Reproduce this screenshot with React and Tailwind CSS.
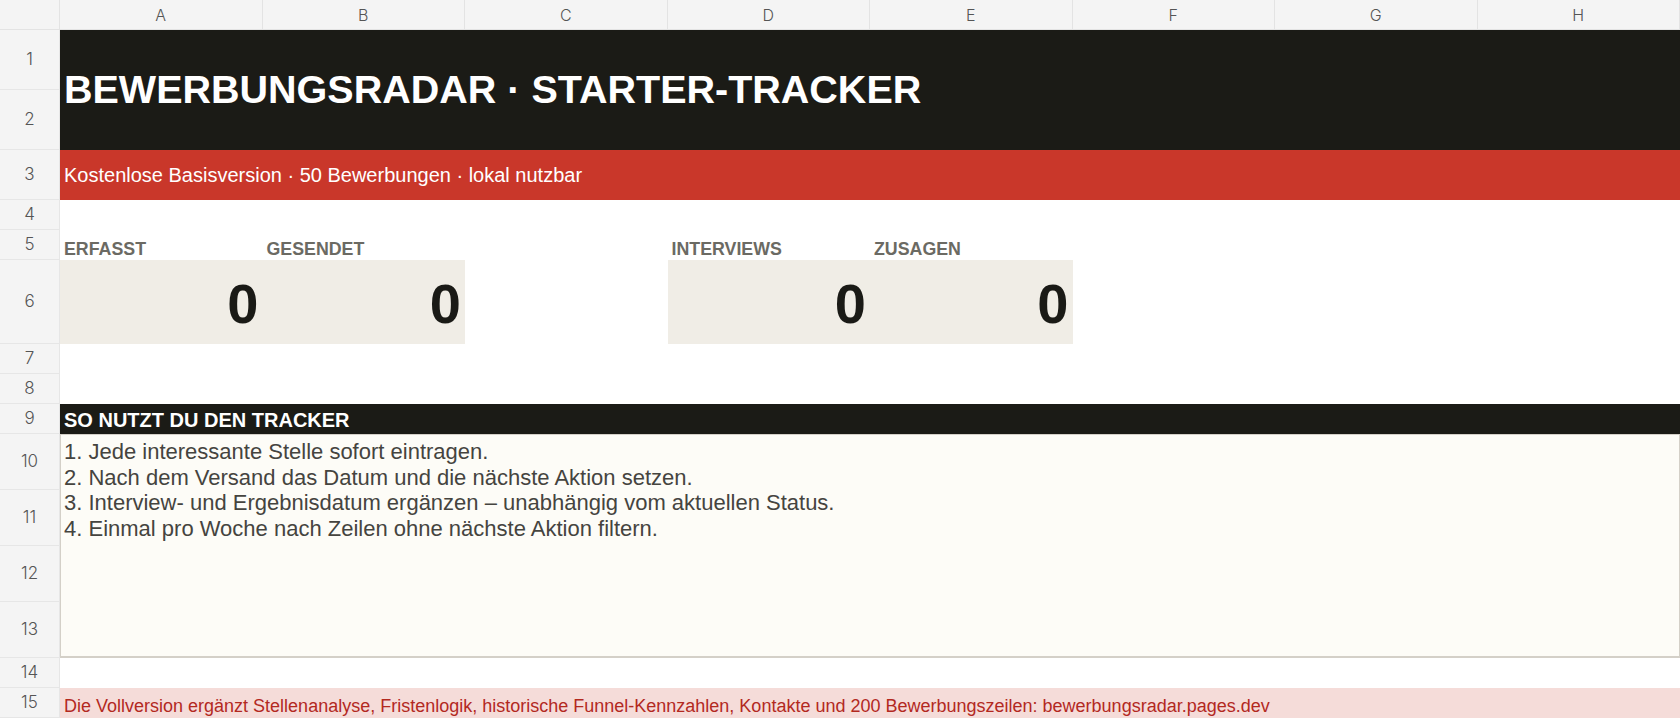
const columns = [
  { label: 'A', pos: 'col-start-2' },
  { label: 'B', pos: 'col-start-3' },
  { label: 'C', pos: 'col-start-4' },
  { label: 'D', pos: 'col-start-5' },
  { label: 'E', pos: 'col-start-6' },
  { label: 'F', pos: 'col-start-7' },
  { label: 'G', pos: 'col-start-8' },
  { label: 'H', pos: 'col-start-9' },
];

const rows = [
  { n: 1, pos: 'row-start-2' },
  { n: 2, pos: 'row-start-3' },
  { n: 3, pos: 'row-start-4' },
  { n: 4, pos: 'row-start-5' },
  { n: 5, pos: 'row-start-6' },
  { n: 6, pos: 'row-start-7' },
  { n: 7, pos: 'row-start-8' },
  { n: 8, pos: 'row-start-9' },
  { n: 9, pos: 'row-start-10' },
  { n: 10, pos: 'row-start-11' },
  { n: 11, pos: 'row-start-12' },
  { n: 12, pos: 'row-start-13' },
  { n: 13, pos: 'row-start-14' },
  { n: 14, pos: 'row-start-15' },
  { n: 15, pos: 'row-start-16' },
];

const stats = [
  { label: 'ERFASST', value: 0, pos: 'col-start-2' },
  { label: 'GESENDET', value: 0, pos: 'col-start-3' },
  { label: 'INTERVIEWS', value: 0, pos: 'col-start-5' },
  { label: 'ZUSAGEN', value: 0, pos: 'col-start-6' },
];

const steps = [
  '1. Jede interessante Stelle sofort eintragen.',
  '2. Nach dem Versand das Datum und die nächste Aktion setzen.',
  '3. Interview- und Ergebnisdatum ergänzen – unabhängig vom aktuellen Status.',
  '4. Einmal pro Woche nach Zeilen ohne nächste Aktion filtern.',
];

export default function App() {
  return (
    <div className="grid h-[718px] w-[1680px] grid-cols-[60px_repeat(8,1fr)] grid-rows-[30px_60px_60px_50px_30px_30px_84px_30px_30px_30px_56px_56px_56px_56px_30px_30px] overflow-hidden bg-white font-['Liberation_Sans',Arial,sans-serif]">
      {/* corner */}
      <div className="col-start-1 row-start-1 border-r border-b border-[#e3e3e3] bg-[#f4f4f4]" />

      {/* column letters */}
      {columns.map(c => (
        <div
          key={c.label}
          className={`${c.pos} row-start-1 flex items-center justify-center border-r border-b border-[#e3e3e3] bg-[#f4f4f4] font-['Inter',sans-serif] text-[16px] font-light text-[#555]`}
        >
          {c.label}
        </div>
      ))}

      {/* row numbers */}
      {rows.map(r => (
        <div
          key={r.n}
          className={`${r.pos} col-start-1 flex items-center justify-center border-r border-b border-[#e6e6e6] bg-[#f4f4f4] font-['Inter',sans-serif] text-[17px] font-light text-[#555]`}
        >
          {r.n}
        </div>
      ))}

      {/* title */}
      <div className="col-start-2 col-end-10 row-start-2 row-end-4 flex items-center bg-[#1b1b16] pl-[4px]">
        <h1 className="text-[39.5px] leading-none font-bold text-white">BEWERBUNGSRADAR · STARTER-TRACKER</h1>
      </div>

      <div className="col-start-2 col-end-10 row-start-4 flex items-center bg-[#c9372a] pl-[4px]">
        <p className="text-[20px] leading-none text-white">Kostenlose Basisversion · 50 Bewerbungen · lokal nutzbar</p>
      </div>

      {/* kpis */}
      {stats.map(s => (
        <div key={s.label} className={`${s.pos} row-start-6 flex items-end pb-[1px] pl-[4px]`}>
          <span className="text-[17.8px] leading-[20px] font-bold text-[#6b6a63]">{s.label}</span>
        </div>
      ))}
      {stats.map(s => (
        <div key={s.label + '-v'} className={`${s.pos} row-start-7 flex items-center justify-end bg-[#f0ede6] pt-[4px] pr-[4px]`}>
          <span className="text-[56px] leading-none font-bold text-[#1a1a16]">{s.value}</span>
        </div>
      ))}

      {/* how-to */}
      <div className="col-start-2 col-end-10 row-start-10 flex items-center bg-[#1b1b16] pt-[2px] pl-[4px]">
        <h2 className="text-[20px] leading-none font-bold text-white">SO NUTZT DU DEN TRACKER</h2>
      </div>
      <div className="col-start-2 col-end-10 row-start-11 row-end-15 border border-b-2 border-[#d4d0c8] bg-[#fdfcf7] pt-[4px] pl-[3px]">
        {steps.map(s => (
          <p key={s} className="text-[22px] leading-[25.5px] text-[#45443f]">{s}</p>
        ))}
      </div>

      {/* upsell */}
      <div className="col-start-2 col-end-10 row-start-16 flex items-end bg-[#f5dcd9] pb-[2px] pl-[4px]">
        <p className="text-[18px] leading-[20px] text-[#b3291f]">
          Die Vollversion ergänzt Stellenanalyse, Fristenlogik, historische Funnel-Kennzahlen, Kontakte und 200 Bewerbungszeilen: bewerbungsradar.pages.dev
        </p>
      </div>
    </div>
  );
}
